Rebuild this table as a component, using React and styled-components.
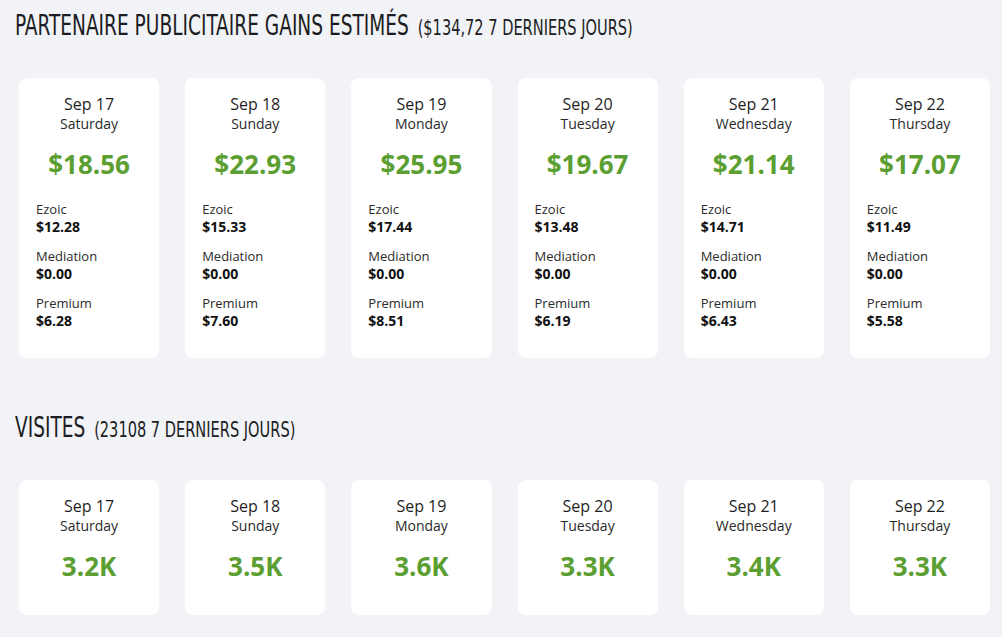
import React from 'react';
import styled, { createGlobalStyle } from 'styled-components';

const GlobalStyle = createGlobalStyle`
  html, body {
    margin: 0;
    padding: 0;
    background: #f1f3f7;
  }
  body {
    font-family: "Open Sans", "Liberation Sans", sans-serif;
    color: #222;
  }
`;

const Page = styled.div`
  padding: 9px 12px 0 15px;
  min-height: 637px;
  box-sizing: border-box;
`;

const Section = styled.section`
  & + & {
    margin-top: 53px;
  }
`;

const Heading = styled.h2`
  margin: 0;
  height: 34px;
  line-height: 34px;
  white-space: nowrap;
  font-family: "Liberation Sans Narrow", "DejaVu Sans Condensed", "Liberation Sans", sans-serif;
  font-weight: 400;
  color: #1c1d22;
  transform: scaleX(0.737);
  transform-origin: left center;
`;

const Title = styled.span`
  font-size: 28px;
  text-transform: uppercase;
`;

const Sub = styled.span`
  font-size: 22px;
  margin-left: 12px;
  text-transform: uppercase;
`;

const Grid = styled.div`
  display: grid;
  grid-template-columns: repeat(6, 1fr);
  column-gap: 26px;
  margin: 35px 0 0 4px;
`;

const Card = styled.div`
  background: #fff;
  border-radius: 8px;
  padding: 16px 17px ${p => (p.$compact ? '31px' : '28px')};
`;

const DateLine = styled.div`
  text-align: center;
  font-size: 16px;
  line-height: 20px;
  color: #1f1f1f;
`;

const DayLine = styled.div`
  text-align: center;
  font-size: 14px;
  line-height: 20px;
  color: #2a2a2a;
`;

const Total = styled.div`
  margin-top: 12px;
  text-align: center;
  font-size: 26px;
  line-height: 36px;
  font-weight: 700;
  color: #5b9e31;
`;

const Breakdown = styled.div`
  display: flex;
  flex-direction: column;
  gap: 11px;
  margin-top: 18px;
`;

const Label = styled.div`
  font-size: 13px;
  line-height: 18px;
  color: #2b2b2b;
`;

const Value = styled.div`
  font-size: 14px;
  line-height: 18px;
  font-weight: 700;
  color: #111;
`;

const days = [
  { date: 'Sep 17', day: 'Saturday', total: '$18.56', ezoic: '$12.28', mediation: '$0.00', premium: '$6.28', visits: '3.2K' },
  { date: 'Sep 18', day: 'Sunday', total: '$22.93', ezoic: '$15.33', mediation: '$0.00', premium: '$7.60', visits: '3.5K' },
  { date: 'Sep 19', day: 'Monday', total: '$25.95', ezoic: '$17.44', mediation: '$0.00', premium: '$8.51', visits: '3.6K' },
  { date: 'Sep 20', day: 'Tuesday', total: '$19.67', ezoic: '$13.48', mediation: '$0.00', premium: '$6.19', visits: '3.3K' },
  { date: 'Sep 21', day: 'Wednesday', total: '$21.14', ezoic: '$14.71', mediation: '$0.00', premium: '$6.43', visits: '3.4K' },
  { date: 'Sep 22', day: 'Thursday', total: '$17.07', ezoic: '$11.49', mediation: '$0.00', premium: '$5.58', visits: '3.3K' },
];

const EarningsCard = ({ d }) => (
  <Card>
    <DateLine>{d.date}</DateLine>
    <DayLine>{d.day}</DayLine>
    <Total>{d.total}</Total>
    <Breakdown>
      <div>
        <Label>Ezoic</Label>
        <Value>{d.ezoic}</Value>
      </div>
      <div>
        <Label>Mediation</Label>
        <Value>{d.mediation}</Value>
      </div>
      <div>
        <Label>Premium</Label>
        <Value>{d.premium}</Value>
      </div>
    </Breakdown>
  </Card>
);

const VisitCard = ({ d }) => (
  <Card $compact>
    <DateLine>{d.date}</DateLine>
    <DayLine>{d.day}</DayLine>
    <Total>{d.visits}</Total>
  </Card>
);

export default function App() {
  return (
    <Page>
      <GlobalStyle />
      <Section>
        <Heading>
          <Title>Partenaire publicitaire gains estimés</Title>
          <Sub>($134,72 7 derniers jours)</Sub>
        </Heading>
        <Grid>
          {days.map(d => <EarningsCard key={d.date} d={d} />)}
        </Grid>
      </Section>
      <Section>
        <Heading>
          <Title>Visites</Title>
          <Sub>(23108 7 derniers jours)</Sub>
        </Heading>
        <Grid>
          {days.map(d => <VisitCard key={d.date} d={d} />)}
        </Grid>
      </Section>
    </Page>
  );
}
